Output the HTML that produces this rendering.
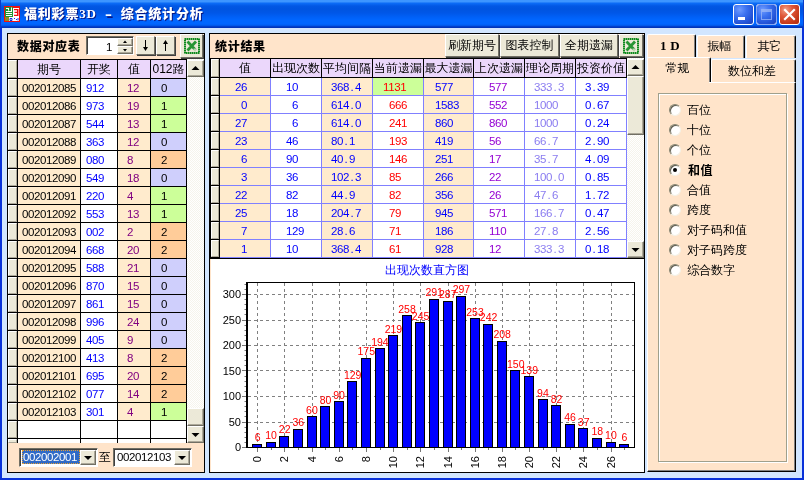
<!DOCTYPE html>
<html lang="zh-CN"><head><meta charset="utf-8"><title>福利彩票3D - 综合统计分析</title>
<style>
html,body{margin:0;padding:0;}
body{width:804px;height:480px;overflow:hidden;position:relative;background:#D2E6FF;font-family:"Liberation Sans","WenQuanYi Zen Hei Sharp","WenQuanYi Zen Hei","Noto Sans CJK SC",sans-serif;font-size:12px;color:#000;}
div{position:absolute;box-sizing:border-box;white-space:nowrap;overflow:hidden;}
.c{text-align:center;line-height:17px;}
.n{font-size:11.5px;letter-spacing:-0.4px;line-height:19px;}
.d{display:inline-block;width:6px;text-align:center;}
.h{line-height:18px;text-align:center;font-size:12px;}
.btn{background:#ECE9D8;border:1px solid;border-color:#fff #716F64 #716F64 #fff;box-shadow:1px 1px 0 #404040;text-align:center;}
.ind{background:#ECE9D8;border:1px solid;border-color:#fff #ACA899 #ACA899 #fff;}
.sb{background:#ECE9D8;border:1px solid;border-color:#fff #716F64 #716F64 #fff;box-shadow:inset -1px -1px 0 #ACA899;}
.trk{background-color:#F6F4EC;background-image:linear-gradient(45deg,#fff 25%,transparent 25%,transparent 75%,#fff 75%),linear-gradient(45deg,#fff 25%,transparent 25%,transparent 75%,#fff 75%);background-size:2px 2px;background-position:0 0,1px 1px;}
.b{font-weight:bold;}
.rl{font-size:12px;line-height:14px;}
svg{position:absolute;overflow:visible;}
</style></head>
<body>
<div style="left:0;top:0;width:804px;height:480px;will-change:transform;">
<div style="left:0;top:0;width:804px;height:28px;background:linear-gradient(to bottom,#3D95FF 0,#3D95FF 1.5px,#0B6AF5 3.5px,#0257E4 6px,#0054E0 9px,#0057E8 13px,#0060F7 17px,#0066FF 20px,#0066FF 24px,#0058EA 25.5px,#0040CC 26.5px,#002EB0 28px);"></div>
<div style="left:0px;top:0px;width:1px;height:28px;background:#0A3CC8;"></div>
<div style="left:803px;top:0px;width:1px;height:28px;background:#0A3CC8;"></div>
<div style="left:0px;top:28px;width:2px;height:452px;background:#0831D9;"></div>
<div style="left:802px;top:28px;width:2px;height:452px;background:#0831D9;"></div>
<div style="left:0px;top:478px;width:804px;height:2px;background:#0831D9;"></div>
<svg style="left:4px;top:6px" width="16" height="16" viewBox="0 0 16 16">
<rect x="0" y="0" width="16" height="16" fill="#F01010"/>
<rect x="1" y="1" width="8" height="10" fill="#1E9630"/>
<rect x="9" y="2" width="6" height="9" fill="#fff"/>
<rect x="1" y="11" width="4" height="4" fill="#8C8C20"/>
<rect x="5" y="11" width="10" height="4" fill="#fff"/>
<path d="M2 2.5h3 M4.500 2.500v2 M2 5.500h6 M7.500 1.500v4 M2 7.500h6 M2 9.500h6" stroke="#fff" stroke-width="1" fill="none"/>
<path d="M10 3h4.500v7h-4.500v-1.300h3v-1.700h-2.500v-1.300h2.500v-1.400h-3z" fill="#F01010"/>
<path d="M6 12.500h2v2h-2z M10 12.500h1 M12 13.500h1 M14 12v2.500" stroke="#1030E0" stroke-width="1" fill="none"/>
</svg>
<div class="b" style="left:24px;top:4px;height:20px;line-height:20px;font-size:13px;font-weight:900;color:#fff;letter-spacing:0.8px;font-family:'Liberation Serif','Noto Sans CJK SC',serif;text-shadow:1px 1px 0 #0A1883;">福利彩票3D<span style="display:inline-block;width:24px;text-align:center;transform:scale(1.6,1.5)">-</span>综合统计分析</div>
<div style="left:733px;top:4px;width:21px;height:21px;border:1px solid #fff;border-radius:3px;background:radial-gradient(circle at 30% 25%,#6F9BFF 0%,#3C72F0 35%,#2454D8 70%,#1C40B8 100%);"></div>
<div style="left:756px;top:4px;width:21px;height:21px;border:1px solid #fff;border-radius:3px;background:radial-gradient(circle at 30% 25%,#6F9BFF 0%,#3C72F0 35%,#2454D8 70%,#1C40B8 100%);"></div>
<div style="left:779px;top:4px;width:21px;height:21px;border:1px solid #fff;border-radius:3px;background:radial-gradient(circle at 30% 25%,#F0A088 0%,#E0583A 35%,#C63A1B 70%,#B02A10 100%);"></div>
<div style="left:756px;top:4px;width:21px;height:21px;border:1px solid #86A6F2;border-radius:3px;"></div>
<div style="left:738px;top:17px;width:7px;height:3px;background:#fff;"></div>
<div style="left:761px;top:9px;width:11px;height:11px;border:1px solid #9DB8F5;border-top-width:3px;opacity:.75"></div>
<svg style="left:779px;top:4px" width="21" height="21"><path d="M6 6L15 15M15 6L6 15" stroke="#fff" stroke-width="2.2" stroke-linecap="square"/></svg>
<div style="left:7px;top:33px;width:198px;height:440px;background:#FFE4CA;border:1px solid #000;"></div>
<div class="b" style="left:17px;top:37px;height:17px;line-height:17px;font-size:12px;letter-spacing:0.7px;font-weight:900;font-family:'Noto Sans CJK SC',sans-serif;">数据对应表</div>
<div style="left:86px;top:36px;width:48px;height:19px;background:#fff;border:1px solid;border-color:#716F64 #fff #fff #716F64;box-shadow:inset 1px 1px 0 #404040;"></div>
<div class="n" style="left:88px;top:38px;width:24px;height:16px;line-height:18px;text-align:right;">1</div>
<div class="sb" style="left:117px;top:38px;width:16px;height:8px;"></div>
<div class="sb" style="left:117px;top:46px;width:16px;height:8px;"></div>
<svg style="left:117px;top:38px" width="16" height="16"><path d="M6 5h4l-2-2.500z M6 11h4l-2 2.500z" fill="#000"/></svg>
<div class="btn" style="left:136px;top:36px;width:19px;height:19px;"></div>
<div class="btn" style="left:156px;top:36px;width:19px;height:19px;"></div>
<svg style="left:136px;top:36px" width="40" height="19"><path d="M9.5 4v9M29.5 15v-9" stroke="#000" stroke-width="1" fill="none"/><path d="M7 11h5l-2.500 4z M27 8h5l-2.500-4z" fill="#000"/></svg>
<div class="btn" style="left:180px;top:34px;width:23px;height:24px;"></div>
<svg style="left:184px;top:38px" width="16" height="16" viewBox="0 0 16 16">
<rect x="1" y="1" width="14" height="14" fill="none" stroke="#0E8A1E" stroke-width="2" stroke-dasharray="1 1"/>
<rect x="1" y="1" width="14" height="14" fill="none" stroke="#0E8A1E" stroke-width="2" opacity=".55"/>
<path d="M3.500 3.500L12 12.500M12 3.500L3.500 12.500" stroke="#128C22" stroke-width="2.8" opacity=".9"/>
<path d="M9.500 10.500h4v3h-4z" fill="#ECE9D8" opacity=".75"/>
</svg>
<div style="left:8px;top:59px;width:179px;height:384px;background:#000;"></div>
<div class="ind" style="left:8px;top:60px;width:9px;height:18px;"></div>
<div class="h" style="left:18px;top:60px;width:62px;height:18px;background:#EBD7FB;">期号</div>
<div class="h" style="left:81px;top:60px;width:36px;height:18px;background:#EBD7FB;">开奖</div>
<div class="h" style="left:118px;top:60px;width:32px;height:18px;background:#EBD7FB;">值</div>
<div class="h" style="left:151px;top:60px;width:35px;height:18px;background:#EBD7FB;">012路</div>
<div class="ind" style="left:8px;top:79px;width:9px;height:17px;"></div>
<div class="n" style="left:18px;top:79px;width:62px;height:17px;background:#FFEBCD;padding-left:4px;">002012085</div>
<div class="n" style="left:81px;top:79px;width:36px;height:17px;background:#fff;padding-left:5px;color:#0000FF;">912</div>
<div class="n" style="left:118px;top:79px;width:32px;height:17px;background:#FFEBCD;padding-left:9px;color:#800080;">12</div>
<div class="n" style="left:151px;top:79px;width:35px;height:17px;background:#CFCFFC;padding-left:10px;">0</div>
<div class="ind" style="left:8px;top:97px;width:9px;height:17px;"></div>
<div class="n" style="left:18px;top:97px;width:62px;height:17px;background:#FFEBCD;padding-left:4px;">002012086</div>
<div class="n" style="left:81px;top:97px;width:36px;height:17px;background:#fff;padding-left:5px;color:#0000FF;">973</div>
<div class="n" style="left:118px;top:97px;width:32px;height:17px;background:#FFEBCD;padding-left:9px;color:#800080;">19</div>
<div class="n" style="left:151px;top:97px;width:35px;height:17px;background:#CCFF99;padding-left:10px;">1</div>
<div class="ind" style="left:8px;top:115px;width:9px;height:17px;"></div>
<div class="n" style="left:18px;top:115px;width:62px;height:17px;background:#FFEBCD;padding-left:4px;">002012087</div>
<div class="n" style="left:81px;top:115px;width:36px;height:17px;background:#fff;padding-left:5px;color:#0000FF;">544</div>
<div class="n" style="left:118px;top:115px;width:32px;height:17px;background:#FFEBCD;padding-left:9px;color:#800080;">13</div>
<div class="n" style="left:151px;top:115px;width:35px;height:17px;background:#CCFF99;padding-left:10px;">1</div>
<div class="ind" style="left:8px;top:133px;width:9px;height:17px;"></div>
<div class="n" style="left:18px;top:133px;width:62px;height:17px;background:#FFEBCD;padding-left:4px;">002012088</div>
<div class="n" style="left:81px;top:133px;width:36px;height:17px;background:#fff;padding-left:5px;color:#0000FF;">363</div>
<div class="n" style="left:118px;top:133px;width:32px;height:17px;background:#FFEBCD;padding-left:9px;color:#800080;">12</div>
<div class="n" style="left:151px;top:133px;width:35px;height:17px;background:#CFCFFC;padding-left:10px;">0</div>
<div class="ind" style="left:8px;top:151px;width:9px;height:17px;"></div>
<div class="n" style="left:18px;top:151px;width:62px;height:17px;background:#FFEBCD;padding-left:4px;">002012089</div>
<div class="n" style="left:81px;top:151px;width:36px;height:17px;background:#fff;padding-left:5px;color:#0000FF;">080</div>
<div class="n" style="left:118px;top:151px;width:32px;height:17px;background:#FFEBCD;padding-left:9px;color:#800080;">8</div>
<div class="n" style="left:151px;top:151px;width:35px;height:17px;background:#FFCC99;padding-left:10px;">2</div>
<div class="ind" style="left:8px;top:169px;width:9px;height:17px;"></div>
<div class="n" style="left:18px;top:169px;width:62px;height:17px;background:#FFEBCD;padding-left:4px;">002012090</div>
<div class="n" style="left:81px;top:169px;width:36px;height:17px;background:#fff;padding-left:5px;color:#0000FF;">549</div>
<div class="n" style="left:118px;top:169px;width:32px;height:17px;background:#FFEBCD;padding-left:9px;color:#800080;">18</div>
<div class="n" style="left:151px;top:169px;width:35px;height:17px;background:#CFCFFC;padding-left:10px;">0</div>
<div class="ind" style="left:8px;top:187px;width:9px;height:17px;"></div>
<div class="n" style="left:18px;top:187px;width:62px;height:17px;background:#FFEBCD;padding-left:4px;">002012091</div>
<div class="n" style="left:81px;top:187px;width:36px;height:17px;background:#fff;padding-left:5px;color:#0000FF;">220</div>
<div class="n" style="left:118px;top:187px;width:32px;height:17px;background:#FFEBCD;padding-left:9px;color:#800080;">4</div>
<div class="n" style="left:151px;top:187px;width:35px;height:17px;background:#CCFF99;padding-left:10px;">1</div>
<div class="ind" style="left:8px;top:205px;width:9px;height:17px;"></div>
<div class="n" style="left:18px;top:205px;width:62px;height:17px;background:#FFEBCD;padding-left:4px;">002012092</div>
<div class="n" style="left:81px;top:205px;width:36px;height:17px;background:#fff;padding-left:5px;color:#0000FF;">553</div>
<div class="n" style="left:118px;top:205px;width:32px;height:17px;background:#FFEBCD;padding-left:9px;color:#800080;">13</div>
<div class="n" style="left:151px;top:205px;width:35px;height:17px;background:#CCFF99;padding-left:10px;">1</div>
<div class="ind" style="left:8px;top:223px;width:9px;height:17px;"></div>
<div class="n" style="left:18px;top:223px;width:62px;height:17px;background:#FFEBCD;padding-left:4px;">002012093</div>
<div class="n" style="left:81px;top:223px;width:36px;height:17px;background:#fff;padding-left:5px;color:#0000FF;">002</div>
<div class="n" style="left:118px;top:223px;width:32px;height:17px;background:#FFEBCD;padding-left:9px;color:#800080;">2</div>
<div class="n" style="left:151px;top:223px;width:35px;height:17px;background:#FFCC99;padding-left:10px;">2</div>
<div class="ind" style="left:8px;top:241px;width:9px;height:17px;"></div>
<div class="n" style="left:18px;top:241px;width:62px;height:17px;background:#FFEBCD;padding-left:4px;">002012094</div>
<div class="n" style="left:81px;top:241px;width:36px;height:17px;background:#fff;padding-left:5px;color:#0000FF;">668</div>
<div class="n" style="left:118px;top:241px;width:32px;height:17px;background:#FFEBCD;padding-left:9px;color:#800080;">20</div>
<div class="n" style="left:151px;top:241px;width:35px;height:17px;background:#FFCC99;padding-left:10px;">2</div>
<div class="ind" style="left:8px;top:259px;width:9px;height:17px;"></div>
<div class="n" style="left:18px;top:259px;width:62px;height:17px;background:#FFEBCD;padding-left:4px;">002012095</div>
<div class="n" style="left:81px;top:259px;width:36px;height:17px;background:#fff;padding-left:5px;color:#0000FF;">588</div>
<div class="n" style="left:118px;top:259px;width:32px;height:17px;background:#FFEBCD;padding-left:9px;color:#800080;">21</div>
<div class="n" style="left:151px;top:259px;width:35px;height:17px;background:#CFCFFC;padding-left:10px;">0</div>
<div class="ind" style="left:8px;top:277px;width:9px;height:17px;"></div>
<div class="n" style="left:18px;top:277px;width:62px;height:17px;background:#FFEBCD;padding-left:4px;">002012096</div>
<div class="n" style="left:81px;top:277px;width:36px;height:17px;background:#fff;padding-left:5px;color:#0000FF;">870</div>
<div class="n" style="left:118px;top:277px;width:32px;height:17px;background:#FFEBCD;padding-left:9px;color:#800080;">15</div>
<div class="n" style="left:151px;top:277px;width:35px;height:17px;background:#CFCFFC;padding-left:10px;">0</div>
<div class="ind" style="left:8px;top:295px;width:9px;height:17px;"></div>
<div class="n" style="left:18px;top:295px;width:62px;height:17px;background:#FFEBCD;padding-left:4px;">002012097</div>
<div class="n" style="left:81px;top:295px;width:36px;height:17px;background:#fff;padding-left:5px;color:#0000FF;">861</div>
<div class="n" style="left:118px;top:295px;width:32px;height:17px;background:#FFEBCD;padding-left:9px;color:#800080;">15</div>
<div class="n" style="left:151px;top:295px;width:35px;height:17px;background:#CFCFFC;padding-left:10px;">0</div>
<div class="ind" style="left:8px;top:313px;width:9px;height:17px;"></div>
<div class="n" style="left:18px;top:313px;width:62px;height:17px;background:#FFEBCD;padding-left:4px;">002012098</div>
<div class="n" style="left:81px;top:313px;width:36px;height:17px;background:#fff;padding-left:5px;color:#0000FF;">996</div>
<div class="n" style="left:118px;top:313px;width:32px;height:17px;background:#FFEBCD;padding-left:9px;color:#800080;">24</div>
<div class="n" style="left:151px;top:313px;width:35px;height:17px;background:#CFCFFC;padding-left:10px;">0</div>
<div class="ind" style="left:8px;top:331px;width:9px;height:17px;"></div>
<div class="n" style="left:18px;top:331px;width:62px;height:17px;background:#FFEBCD;padding-left:4px;">002012099</div>
<div class="n" style="left:81px;top:331px;width:36px;height:17px;background:#fff;padding-left:5px;color:#0000FF;">405</div>
<div class="n" style="left:118px;top:331px;width:32px;height:17px;background:#FFEBCD;padding-left:9px;color:#800080;">9</div>
<div class="n" style="left:151px;top:331px;width:35px;height:17px;background:#CFCFFC;padding-left:10px;">0</div>
<div class="ind" style="left:8px;top:349px;width:9px;height:17px;"></div>
<div class="n" style="left:18px;top:349px;width:62px;height:17px;background:#FFEBCD;padding-left:4px;">002012100</div>
<div class="n" style="left:81px;top:349px;width:36px;height:17px;background:#fff;padding-left:5px;color:#0000FF;">413</div>
<div class="n" style="left:118px;top:349px;width:32px;height:17px;background:#FFEBCD;padding-left:9px;color:#800080;">8</div>
<div class="n" style="left:151px;top:349px;width:35px;height:17px;background:#FFCC99;padding-left:10px;">2</div>
<div class="ind" style="left:8px;top:367px;width:9px;height:17px;"></div>
<div class="n" style="left:18px;top:367px;width:62px;height:17px;background:#FFEBCD;padding-left:4px;">002012101</div>
<div class="n" style="left:81px;top:367px;width:36px;height:17px;background:#fff;padding-left:5px;color:#0000FF;">695</div>
<div class="n" style="left:118px;top:367px;width:32px;height:17px;background:#FFEBCD;padding-left:9px;color:#800080;">20</div>
<div class="n" style="left:151px;top:367px;width:35px;height:17px;background:#FFCC99;padding-left:10px;">2</div>
<div class="ind" style="left:8px;top:385px;width:9px;height:17px;"></div>
<div class="n" style="left:18px;top:385px;width:62px;height:17px;background:#FFEBCD;padding-left:4px;">002012102</div>
<div class="n" style="left:81px;top:385px;width:36px;height:17px;background:#fff;padding-left:5px;color:#0000FF;">077</div>
<div class="n" style="left:118px;top:385px;width:32px;height:17px;background:#FFEBCD;padding-left:9px;color:#800080;">14</div>
<div class="n" style="left:151px;top:385px;width:35px;height:17px;background:#FFCC99;padding-left:10px;">2</div>
<div class="ind" style="left:8px;top:403px;width:9px;height:17px;"></div>
<div class="n" style="left:18px;top:403px;width:62px;height:17px;background:#FFEBCD;padding-left:4px;">002012103</div>
<div class="n" style="left:81px;top:403px;width:36px;height:17px;background:#fff;padding-left:5px;color:#0000FF;">301</div>
<div class="n" style="left:118px;top:403px;width:32px;height:17px;background:#FFEBCD;padding-left:9px;color:#800080;">4</div>
<div class="n" style="left:151px;top:403px;width:35px;height:17px;background:#CCFF99;padding-left:10px;">1</div>
<div class="ind" style="left:8px;top:421px;width:9px;height:17px;"></div>
<div style="left:18px;top:421px;width:62px;height:17px;background:#fff;"></div>
<div style="left:81px;top:421px;width:36px;height:17px;background:#fff;"></div>
<div style="left:118px;top:421px;width:32px;height:17px;background:#fff;"></div>
<div style="left:151px;top:421px;width:35px;height:17px;background:#fff;"></div>
<div class="ind" style="left:8px;top:439px;width:9px;height:4px;"></div>
<div style="left:18px;top:439px;width:62px;height:4px;background:#fff;"></div>
<div style="left:81px;top:439px;width:36px;height:4px;background:#fff;"></div>
<div style="left:118px;top:439px;width:32px;height:4px;background:#fff;"></div>
<div style="left:151px;top:439px;width:35px;height:4px;background:#fff;"></div>
<div class="trk" style="left:187px;top:59px;width:17px;height:384px;"></div>
<div class="sb" style="left:187px;top:60px;width:17px;height:17px;"></div>
<div class="sb" style="left:187px;top:408px;width:17px;height:18px;"></div>
<div class="sb" style="left:187px;top:426px;width:17px;height:17px;"></div>
<svg style="left:187px;top:60px" width="17" height="17"><path d="M4.500 10h8l-4-4z" fill="#000"/></svg>
<svg style="left:187px;top:426px" width="17" height="17"><path d="M4.500 7h8l-4 4z" fill="#000"/></svg>
<div style="left:19px;top:448px;width:79px;height:19px;background:#fff;border:1px solid;border-color:#716F64 #fff #fff #716F64;box-shadow:inset 1px 1px 0 #404040;"></div>
<div class="n" style="left:22px;top:450px;width:58px;height:14px;background:#316AC5;color:#fff;line-height:15px;padding-left:1px;outline:1px dotted #E8A030;outline-offset:-1px;">002002001</div>
<div class="sb" style="left:80px;top:450px;width:16px;height:15px;"></div>
<svg style="left:80px;top:450px" width="16" height="15"><path d="M4 6h8l-4 4z" fill="#000"/></svg>
<div style="left:99px;top:450px;height:15px;line-height:15px;font-size:12px;">至</div>
<div style="left:113px;top:448px;width:79px;height:19px;background:#fff;border:1px solid;border-color:#716F64 #fff #fff #716F64;box-shadow:inset 1px 1px 0 #404040;"></div>
<div class="n" style="left:116px;top:450px;width:58px;height:14px;line-height:15px;padding-left:1px;">002012103</div>
<div class="sb" style="left:174px;top:450px;width:16px;height:15px;"></div>
<svg style="left:174px;top:450px" width="16" height="15"><path d="M4 6h8l-4 4z" fill="#000"/></svg>
<div style="left:209px;top:33px;width:436px;height:440px;background:#FFE4CA;border:1px solid #000;"></div>
<div class="b" style="left:215px;top:37px;height:17px;line-height:17px;font-size:12px;letter-spacing:0.7px;font-weight:900;font-family:'Noto Sans CJK SC',sans-serif;">统计结果</div>
<div class="btn" style="left:445px;top:34px;width:54px;height:23px;line-height:21px;font-size:12px;">刷新期号</div>
<div class="btn" style="left:500px;top:34px;width:59px;height:23px;line-height:21px;font-size:12px;">图表控制</div>
<div class="btn" style="left:560px;top:34px;width:58px;height:23px;line-height:21px;font-size:12px;">全期遗漏</div>
<div class="btn" style="left:619px;top:34px;width:24px;height:23px;"></div>
<svg style="left:623px;top:38px" width="16" height="16" viewBox="0 0 16 16">
<rect x="1" y="1" width="14" height="14" fill="none" stroke="#0E8A1E" stroke-width="2" stroke-dasharray="1 1"/>
<rect x="1" y="1" width="14" height="14" fill="none" stroke="#0E8A1E" stroke-width="2" opacity=".55"/>
<path d="M3.500 3.500L12 12.500M12 3.500L3.500 12.500" stroke="#128C22" stroke-width="2.8" opacity=".9"/>
<path d="M9.500 10.500h4v3h-4z" fill="#ECE9D8" opacity=".75"/>
</svg>
<div style="left:210px;top:58px;width:417px;height:200px;background:#000;"></div>
<div style="left:220px;top:78px;width:407px;height:180px;background:#8080FF;"></div>
<div class="ind" style="left:211px;top:59px;width:8px;height:18px;"></div>
<div class="h" style="left:220px;top:59px;width:50px;height:18px;background:#EBD7FB;">值</div>
<div class="h" style="left:271px;top:59px;width:50px;height:18px;background:#EBD7FB;">出现次数</div>
<div class="h" style="left:322px;top:59px;width:50px;height:18px;background:#EBD7FB;">平均间隔</div>
<div class="h" style="left:373px;top:59px;width:50px;height:18px;background:#EBD7FB;">当前遗漏</div>
<div class="h" style="left:424px;top:59px;width:49px;height:18px;background:#EBD7FB;">最大遗漏</div>
<div class="h" style="left:474px;top:59px;width:50px;height:18px;background:#EBD7FB;">上次遗漏</div>
<div class="h" style="left:525px;top:59px;width:50px;height:18px;background:#EBD7FB;">理论周期</div>
<div class="h" style="left:576px;top:59px;width:50px;height:18px;background:#EBD7FB;">投资价值</div>
<div class="ind" style="left:211px;top:78px;width:8px;height:17px;"></div>
<div class="n" style="left:220px;top:78px;width:50px;height:17px;background:#FFEBCD;color:#0000FF;padding-left:15px;">26</div>
<div class="n" style="left:271px;top:78px;width:50px;height:17px;background:#fff;color:#0000FF;padding-left:15px;">10</div>
<div class="n" style="left:322px;top:78px;width:50px;height:17px;background:#FFEBCD;color:#0000FF;padding-left:9px;">368<span class="d">.</span>4</div>
<div class="n" style="left:373px;top:78px;width:50px;height:17px;background:#CCFF99;color:#FF0000;padding-left:10px;">1131</div>
<div class="n" style="left:424px;top:78px;width:49px;height:17px;background:#FFEBCD;color:#0000FF;padding-left:11px;">577</div>
<div class="n" style="left:474px;top:78px;width:50px;height:17px;background:#fff;color:#9400D3;padding-left:15px;">577</div>
<div class="n" style="left:525px;top:78px;width:50px;height:17px;background:#fff;color:#8A7CF0;padding-left:9px;">333<span class="d">.</span>3</div>
<div class="n" style="left:576px;top:78px;width:50px;height:17px;background:#fff;color:#0000FF;padding-left:9px;">3<span class="d">.</span>39</div>
<div class="ind" style="left:211px;top:96px;width:8px;height:17px;"></div>
<div class="n" style="left:220px;top:96px;width:50px;height:17px;background:#FFEBCD;color:#0000FF;padding-left:21px;">0</div>
<div class="n" style="left:271px;top:96px;width:50px;height:17px;background:#fff;color:#0000FF;padding-left:21px;">6</div>
<div class="n" style="left:322px;top:96px;width:50px;height:17px;background:#FFEBCD;color:#0000FF;padding-left:9px;">614<span class="d">.</span>0</div>
<div class="n" style="left:373px;top:96px;width:50px;height:17px;background:#fff;color:#FF0000;padding-left:16px;">666</div>
<div class="n" style="left:424px;top:96px;width:49px;height:17px;background:#FFEBCD;color:#0000FF;padding-left:11px;">1583</div>
<div class="n" style="left:474px;top:96px;width:50px;height:17px;background:#fff;color:#9400D3;padding-left:15px;">552</div>
<div class="n" style="left:525px;top:96px;width:50px;height:17px;background:#fff;color:#8A7CF0;padding-left:9px;">1000</div>
<div class="n" style="left:576px;top:96px;width:50px;height:17px;background:#fff;color:#0000FF;padding-left:9px;">0<span class="d">.</span>67</div>
<div class="ind" style="left:211px;top:114px;width:8px;height:17px;"></div>
<div class="n" style="left:220px;top:114px;width:50px;height:17px;background:#FFEBCD;color:#0000FF;padding-left:15px;">27</div>
<div class="n" style="left:271px;top:114px;width:50px;height:17px;background:#fff;color:#0000FF;padding-left:21px;">6</div>
<div class="n" style="left:322px;top:114px;width:50px;height:17px;background:#FFEBCD;color:#0000FF;padding-left:9px;">614<span class="d">.</span>0</div>
<div class="n" style="left:373px;top:114px;width:50px;height:17px;background:#fff;color:#FF0000;padding-left:16px;">241</div>
<div class="n" style="left:424px;top:114px;width:49px;height:17px;background:#FFEBCD;color:#0000FF;padding-left:11px;">860</div>
<div class="n" style="left:474px;top:114px;width:50px;height:17px;background:#fff;color:#9400D3;padding-left:15px;">860</div>
<div class="n" style="left:525px;top:114px;width:50px;height:17px;background:#fff;color:#8A7CF0;padding-left:9px;">1000</div>
<div class="n" style="left:576px;top:114px;width:50px;height:17px;background:#fff;color:#0000FF;padding-left:9px;">0<span class="d">.</span>24</div>
<div class="ind" style="left:211px;top:132px;width:8px;height:17px;"></div>
<div class="n" style="left:220px;top:132px;width:50px;height:17px;background:#FFEBCD;color:#0000FF;padding-left:15px;">23</div>
<div class="n" style="left:271px;top:132px;width:50px;height:17px;background:#fff;color:#0000FF;padding-left:15px;">46</div>
<div class="n" style="left:322px;top:132px;width:50px;height:17px;background:#FFEBCD;color:#0000FF;padding-left:9px;">80<span class="d">.</span>1</div>
<div class="n" style="left:373px;top:132px;width:50px;height:17px;background:#fff;color:#FF0000;padding-left:16px;">193</div>
<div class="n" style="left:424px;top:132px;width:49px;height:17px;background:#FFEBCD;color:#0000FF;padding-left:11px;">419</div>
<div class="n" style="left:474px;top:132px;width:50px;height:17px;background:#fff;color:#9400D3;padding-left:15px;">56</div>
<div class="n" style="left:525px;top:132px;width:50px;height:17px;background:#fff;color:#8A7CF0;padding-left:9px;">66<span class="d">.</span>7</div>
<div class="n" style="left:576px;top:132px;width:50px;height:17px;background:#fff;color:#0000FF;padding-left:9px;">2<span class="d">.</span>90</div>
<div class="ind" style="left:211px;top:150px;width:8px;height:17px;"></div>
<div class="n" style="left:220px;top:150px;width:50px;height:17px;background:#FFEBCD;color:#0000FF;padding-left:21px;">6</div>
<div class="n" style="left:271px;top:150px;width:50px;height:17px;background:#fff;color:#0000FF;padding-left:15px;">90</div>
<div class="n" style="left:322px;top:150px;width:50px;height:17px;background:#FFEBCD;color:#0000FF;padding-left:9px;">40<span class="d">.</span>9</div>
<div class="n" style="left:373px;top:150px;width:50px;height:17px;background:#fff;color:#FF0000;padding-left:16px;">146</div>
<div class="n" style="left:424px;top:150px;width:49px;height:17px;background:#FFEBCD;color:#0000FF;padding-left:11px;">251</div>
<div class="n" style="left:474px;top:150px;width:50px;height:17px;background:#fff;color:#9400D3;padding-left:15px;">17</div>
<div class="n" style="left:525px;top:150px;width:50px;height:17px;background:#fff;color:#8A7CF0;padding-left:9px;">35<span class="d">.</span>7</div>
<div class="n" style="left:576px;top:150px;width:50px;height:17px;background:#fff;color:#0000FF;padding-left:9px;">4<span class="d">.</span>09</div>
<div class="ind" style="left:211px;top:168px;width:8px;height:17px;"></div>
<div class="n" style="left:220px;top:168px;width:50px;height:17px;background:#FFEBCD;color:#0000FF;padding-left:21px;">3</div>
<div class="n" style="left:271px;top:168px;width:50px;height:17px;background:#fff;color:#0000FF;padding-left:15px;">36</div>
<div class="n" style="left:322px;top:168px;width:50px;height:17px;background:#FFEBCD;color:#0000FF;padding-left:9px;">102<span class="d">.</span>3</div>
<div class="n" style="left:373px;top:168px;width:50px;height:17px;background:#fff;color:#FF0000;padding-left:16px;">85</div>
<div class="n" style="left:424px;top:168px;width:49px;height:17px;background:#FFEBCD;color:#0000FF;padding-left:11px;">266</div>
<div class="n" style="left:474px;top:168px;width:50px;height:17px;background:#fff;color:#9400D3;padding-left:15px;">22</div>
<div class="n" style="left:525px;top:168px;width:50px;height:17px;background:#fff;color:#8A7CF0;padding-left:9px;">100<span class="d">.</span>0</div>
<div class="n" style="left:576px;top:168px;width:50px;height:17px;background:#fff;color:#0000FF;padding-left:9px;">0<span class="d">.</span>85</div>
<div class="ind" style="left:211px;top:186px;width:8px;height:17px;"></div>
<div class="n" style="left:220px;top:186px;width:50px;height:17px;background:#FFEBCD;color:#0000FF;padding-left:15px;">22</div>
<div class="n" style="left:271px;top:186px;width:50px;height:17px;background:#fff;color:#0000FF;padding-left:15px;">82</div>
<div class="n" style="left:322px;top:186px;width:50px;height:17px;background:#FFEBCD;color:#0000FF;padding-left:9px;">44<span class="d">.</span>9</div>
<div class="n" style="left:373px;top:186px;width:50px;height:17px;background:#fff;color:#FF0000;padding-left:16px;">82</div>
<div class="n" style="left:424px;top:186px;width:49px;height:17px;background:#FFEBCD;color:#0000FF;padding-left:11px;">356</div>
<div class="n" style="left:474px;top:186px;width:50px;height:17px;background:#fff;color:#9400D3;padding-left:15px;">26</div>
<div class="n" style="left:525px;top:186px;width:50px;height:17px;background:#fff;color:#8A7CF0;padding-left:9px;">47<span class="d">.</span>6</div>
<div class="n" style="left:576px;top:186px;width:50px;height:17px;background:#fff;color:#0000FF;padding-left:9px;">1<span class="d">.</span>72</div>
<div class="ind" style="left:211px;top:204px;width:8px;height:17px;"></div>
<div class="n" style="left:220px;top:204px;width:50px;height:17px;background:#FFEBCD;color:#0000FF;padding-left:15px;">25</div>
<div class="n" style="left:271px;top:204px;width:50px;height:17px;background:#fff;color:#0000FF;padding-left:15px;">18</div>
<div class="n" style="left:322px;top:204px;width:50px;height:17px;background:#FFEBCD;color:#0000FF;padding-left:9px;">204<span class="d">.</span>7</div>
<div class="n" style="left:373px;top:204px;width:50px;height:17px;background:#fff;color:#FF0000;padding-left:16px;">79</div>
<div class="n" style="left:424px;top:204px;width:49px;height:17px;background:#FFEBCD;color:#0000FF;padding-left:11px;">945</div>
<div class="n" style="left:474px;top:204px;width:50px;height:17px;background:#fff;color:#9400D3;padding-left:15px;">571</div>
<div class="n" style="left:525px;top:204px;width:50px;height:17px;background:#fff;color:#8A7CF0;padding-left:9px;">166<span class="d">.</span>7</div>
<div class="n" style="left:576px;top:204px;width:50px;height:17px;background:#fff;color:#0000FF;padding-left:9px;">0<span class="d">.</span>47</div>
<div class="ind" style="left:211px;top:222px;width:8px;height:17px;"></div>
<div class="n" style="left:220px;top:222px;width:50px;height:17px;background:#FFEBCD;color:#0000FF;padding-left:21px;">7</div>
<div class="n" style="left:271px;top:222px;width:50px;height:17px;background:#fff;color:#0000FF;padding-left:15px;">129</div>
<div class="n" style="left:322px;top:222px;width:50px;height:17px;background:#FFEBCD;color:#0000FF;padding-left:9px;">28<span class="d">.</span>6</div>
<div class="n" style="left:373px;top:222px;width:50px;height:17px;background:#fff;color:#FF0000;padding-left:16px;">71</div>
<div class="n" style="left:424px;top:222px;width:49px;height:17px;background:#FFEBCD;color:#0000FF;padding-left:11px;">186</div>
<div class="n" style="left:474px;top:222px;width:50px;height:17px;background:#fff;color:#9400D3;padding-left:15px;">110</div>
<div class="n" style="left:525px;top:222px;width:50px;height:17px;background:#fff;color:#8A7CF0;padding-left:9px;">27<span class="d">.</span>8</div>
<div class="n" style="left:576px;top:222px;width:50px;height:17px;background:#fff;color:#0000FF;padding-left:9px;">2<span class="d">.</span>56</div>
<div class="ind" style="left:211px;top:240px;width:8px;height:17px;"></div>
<div class="n" style="left:220px;top:240px;width:50px;height:17px;background:#FFEBCD;color:#0000FF;padding-left:21px;">1</div>
<div class="n" style="left:271px;top:240px;width:50px;height:17px;background:#fff;color:#0000FF;padding-left:15px;">10</div>
<div class="n" style="left:322px;top:240px;width:50px;height:17px;background:#FFEBCD;color:#0000FF;padding-left:9px;">368<span class="d">.</span>4</div>
<div class="n" style="left:373px;top:240px;width:50px;height:17px;background:#fff;color:#FF0000;padding-left:16px;">61</div>
<div class="n" style="left:424px;top:240px;width:49px;height:17px;background:#FFEBCD;color:#0000FF;padding-left:11px;">928</div>
<div class="n" style="left:474px;top:240px;width:50px;height:17px;background:#fff;color:#9400D3;padding-left:15px;">12</div>
<div class="n" style="left:525px;top:240px;width:50px;height:17px;background:#fff;color:#8A7CF0;padding-left:9px;">333<span class="d">.</span>3</div>
<div class="n" style="left:576px;top:240px;width:50px;height:17px;background:#fff;color:#0000FF;padding-left:9px;">0<span class="d">.</span>18</div>
<div class="trk" style="left:627px;top:58px;width:17px;height:200px;"></div>
<div class="sb" style="left:627px;top:59px;width:17px;height:17px;"></div>
<div class="sb" style="left:627px;top:76px;width:17px;height:59px;"></div>
<div class="sb" style="left:627px;top:241px;width:17px;height:17px;"></div>
<svg style="left:627px;top:59px" width="17" height="17"><path d="M4.5 10h8l-4-4z" fill="#000"/></svg>
<svg style="left:627px;top:241px" width="17" height="17"><path d="M4.5 7h8l-4 4z" fill="#000"/></svg>
<div style="left:210px;top:258px;width:434px;height:1px;background:#000;"></div>
<div style="left:211px;top:259px;width:433px;height:213px;background:#fff;"></div>
<svg style="left:0;top:0" width="804" height="480" viewBox="0 0 804 480" font-family="Liberation Sans, sans-serif">
<text x="427" y="274" font-size="12" fill="#0000FF" text-anchor="middle" font-family="Liberation Sans, WenQuanYi Zen Hei, Noto Sans CJK SC, sans-serif">出现次数直方图</text>
<path d="M248 422.5H634 M248 396.5H634 M248 370.5H634 M248 345.5H634 M248 320.5H634 M248 294.5H634 M257.5 283V447 M284.5 283V447 M312.5 283V447 M339.5 283V447 M366.5 283V447 M393.5 283V447 M420.5 283V447 M448.5 283V447 M475.5 283V447 M502.5 283V447 M529.5 283V447 M556.5 283V447 M583.5 283V447 M611.5 283V447" stroke="#808080" stroke-width="1" stroke-dasharray="3 3" fill="none"/>
<path d="M247 282V448" stroke="#000" stroke-width="2"/>
<path d="M246 447.5H635 M246 282.5H635 M634.5 282V448" stroke="#000" stroke-width="1" fill="none"/>
<path d="M242 447.5H246 M244.5 442.5H246 M244.5 437.5H246 M244.5 432.5H246 M244.5 427.5H246 M242 422.5H246 M244.5 416.5H246 M244.5 411.5H246 M244.5 406.5H246 M244.5 401.5H246 M242 396.5H246 M244.5 391.5H246 M244.5 386.5H246 M244.5 381.5H246 M244.5 376.5H246 M242 370.5H246 M244.5 365.5H246 M244.5 360.5H246 M244.5 355.5H246 M244.5 350.5H246 M242 345.5H246 M244.5 340.5H246 M244.5 335.5H246 M244.5 330.5H246 M244.5 325.5H246 M242 320.5H246 M244.5 314.5H246 M244.5 309.5H246 M244.5 304.5H246 M244.5 299.5H246 M242 294.5H246 M244.5 289.5H246 M244.5 284.5H246 M257.5 448V452 M271.5 448V450 M284.5 448V452 M298.5 448V450 M312.5 448V452 M325.5 448V450 M339.5 448V452 M352.5 448V450 M366.5 448V452 M380.5 448V450 M393.5 448V452 M407.5 448V450 M420.5 448V452 M434.5 448V450 M448.5 448V452 M461.5 448V450 M475.5 448V452 M488.5 448V450 M502.5 448V452 M515.5 448V450 M529.5 448V452 M543.5 448V450 M556.5 448V452 M570.5 448V450 M583.5 448V452 M597.5 448V450 M611.5 448V452 M624.5 448V450" stroke="#777" stroke-width="1" fill="none"/>
<text x="241" y="451.0" font-size="11" text-anchor="end">0</text>
<text x="241" y="425.5" font-size="11" text-anchor="end">50</text>
<text x="241" y="400.0" font-size="11" text-anchor="end">100</text>
<text x="241" y="374.5" font-size="11" text-anchor="end">150</text>
<text x="241" y="349.0" font-size="11" text-anchor="end">200</text>
<text x="241" y="323.5" font-size="11" text-anchor="end">250</text>
<text x="241" y="298.0" font-size="11" text-anchor="end">300</text>
<text transform="translate(261.2 456) rotate(-90)" font-size="11" text-anchor="end">0</text>
<text transform="translate(288.4 456) rotate(-90)" font-size="11" text-anchor="end">2</text>
<text transform="translate(315.6 456) rotate(-90)" font-size="11" text-anchor="end">4</text>
<text transform="translate(342.8 456) rotate(-90)" font-size="11" text-anchor="end">6</text>
<text transform="translate(370.0 456) rotate(-90)" font-size="11" text-anchor="end">8</text>
<text transform="translate(397.1 456) rotate(-90)" font-size="11" text-anchor="end">10</text>
<text transform="translate(424.3 456) rotate(-90)" font-size="11" text-anchor="end">12</text>
<text transform="translate(451.5 456) rotate(-90)" font-size="11" text-anchor="end">14</text>
<text transform="translate(478.7 456) rotate(-90)" font-size="11" text-anchor="end">16</text>
<text transform="translate(505.9 456) rotate(-90)" font-size="11" text-anchor="end">18</text>
<text transform="translate(533.0 456) rotate(-90)" font-size="11" text-anchor="end">20</text>
<text transform="translate(560.2 456) rotate(-90)" font-size="11" text-anchor="end">22</text>
<text transform="translate(587.4 456) rotate(-90)" font-size="11" text-anchor="end">24</text>
<text transform="translate(614.6 456) rotate(-90)" font-size="11" text-anchor="end">26</text>
<rect x="252.5" y="444.5" width="9" height="3.0" fill="#0000FF" stroke="#000" stroke-width="1"/>
<rect x="266.5" y="442.5" width="9" height="5.0" fill="#0000FF" stroke="#000" stroke-width="1"/>
<rect x="279.5" y="436.5" width="9" height="11.0" fill="#0000FF" stroke="#000" stroke-width="1"/>
<rect x="293.5" y="429.5" width="9" height="18.0" fill="#0000FF" stroke="#000" stroke-width="1"/>
<rect x="307.5" y="416.5" width="9" height="31.0" fill="#0000FF" stroke="#000" stroke-width="1"/>
<rect x="320.5" y="406.5" width="9" height="41.0" fill="#0000FF" stroke="#000" stroke-width="1"/>
<rect x="334.5" y="401.5" width="9" height="46.0" fill="#0000FF" stroke="#000" stroke-width="1"/>
<rect x="347.5" y="381.5" width="9" height="66.0" fill="#0000FF" stroke="#000" stroke-width="1"/>
<rect x="361.5" y="358.5" width="9" height="89.0" fill="#0000FF" stroke="#000" stroke-width="1"/>
<rect x="375.5" y="348.5" width="9" height="99.0" fill="#0000FF" stroke="#000" stroke-width="1"/>
<rect x="388.5" y="335.5" width="9" height="112.0" fill="#0000FF" stroke="#000" stroke-width="1"/>
<rect x="402.5" y="315.5" width="9" height="132.0" fill="#0000FF" stroke="#000" stroke-width="1"/>
<rect x="415.5" y="322.5" width="9" height="125.0" fill="#0000FF" stroke="#000" stroke-width="1"/>
<rect x="429.5" y="299.5" width="9" height="148.0" fill="#0000FF" stroke="#000" stroke-width="1"/>
<rect x="443.5" y="301.5" width="9" height="146.0" fill="#0000FF" stroke="#000" stroke-width="1"/>
<rect x="456.5" y="296.5" width="9" height="151.0" fill="#0000FF" stroke="#000" stroke-width="1"/>
<rect x="470.5" y="318.5" width="9" height="129.0" fill="#0000FF" stroke="#000" stroke-width="1"/>
<rect x="483.5" y="324.5" width="9" height="123.0" fill="#0000FF" stroke="#000" stroke-width="1"/>
<rect x="497.5" y="341.5" width="9" height="106.0" fill="#0000FF" stroke="#000" stroke-width="1"/>
<rect x="510.5" y="370.5" width="9" height="77.0" fill="#0000FF" stroke="#000" stroke-width="1"/>
<rect x="524.5" y="376.5" width="9" height="71.0" fill="#0000FF" stroke="#000" stroke-width="1"/>
<rect x="538.5" y="399.5" width="9" height="48.0" fill="#0000FF" stroke="#000" stroke-width="1"/>
<rect x="551.5" y="405.5" width="9" height="42.0" fill="#0000FF" stroke="#000" stroke-width="1"/>
<rect x="565.5" y="424.5" width="9" height="23.0" fill="#0000FF" stroke="#000" stroke-width="1"/>
<rect x="578.5" y="428.5" width="9" height="19.0" fill="#0000FF" stroke="#000" stroke-width="1"/>
<rect x="592.5" y="438.5" width="9" height="9.0" fill="#0000FF" stroke="#000" stroke-width="1"/>
<rect x="606.5" y="442.5" width="9" height="5.0" fill="#0000FF" stroke="#000" stroke-width="1"/>
<rect x="619.5" y="444.5" width="9" height="3.0" fill="#0000FF" stroke="#000" stroke-width="1"/>
<text x="257.6" y="441.4" font-size="10.5" fill="#FF0000" text-anchor="middle">6</text>
<text x="271.1" y="439.4" font-size="10.5" fill="#FF0000" text-anchor="middle">10</text>
<text x="284.7" y="433.3" font-size="10.5" fill="#FF0000" text-anchor="middle">22</text>
<text x="298.3" y="426.1" font-size="10.5" fill="#FF0000" text-anchor="middle">36</text>
<text x="311.9" y="413.9" font-size="10.5" fill="#FF0000" text-anchor="middle">60</text>
<text x="325.5" y="403.7" font-size="10.5" fill="#FF0000" text-anchor="middle">80</text>
<text x="339.1" y="398.6" font-size="10.5" fill="#FF0000" text-anchor="middle">90</text>
<text x="352.7" y="378.7" font-size="10.5" fill="#FF0000" text-anchor="middle">129</text>
<text x="366.3" y="355.2" font-size="10.5" fill="#FF0000" text-anchor="middle">175</text>
<text x="379.9" y="345.6" font-size="10.5" fill="#FF0000" text-anchor="middle">194</text>
<text x="393.4" y="332.8" font-size="10.5" fill="#FF0000" text-anchor="middle">219</text>
<text x="407.0" y="312.9" font-size="10.5" fill="#FF0000" text-anchor="middle">258</text>
<text x="420.6" y="319.6" font-size="10.5" fill="#FF0000" text-anchor="middle">245</text>
<text x="434.2" y="296.1" font-size="10.5" fill="#FF0000" text-anchor="middle">291</text>
<text x="447.8" y="298.1" font-size="10.5" fill="#FF0000" text-anchor="middle">287</text>
<text x="461.4" y="293.0" font-size="10.5" fill="#FF0000" text-anchor="middle">297</text>
<text x="475.0" y="315.5" font-size="10.5" fill="#FF0000" text-anchor="middle">253</text>
<text x="488.6" y="321.1" font-size="10.5" fill="#FF0000" text-anchor="middle">242</text>
<text x="502.2" y="338.4" font-size="10.5" fill="#FF0000" text-anchor="middle">208</text>
<text x="515.8" y="368.0" font-size="10.5" fill="#FF0000" text-anchor="middle">150</text>
<text x="529.3" y="373.6" font-size="10.5" fill="#FF0000" text-anchor="middle">139</text>
<text x="542.9" y="396.6" font-size="10.5" fill="#FF0000" text-anchor="middle">94</text>
<text x="556.5" y="402.7" font-size="10.5" fill="#FF0000" text-anchor="middle">82</text>
<text x="570.1" y="421.0" font-size="10.5" fill="#FF0000" text-anchor="middle">46</text>
<text x="583.7" y="425.6" font-size="10.5" fill="#FF0000" text-anchor="middle">37</text>
<text x="597.3" y="435.3" font-size="10.5" fill="#FF0000" text-anchor="middle">18</text>
<text x="610.9" y="439.4" font-size="10.5" fill="#FF0000" text-anchor="middle">10</text>
<text x="624.5" y="441.4" font-size="10.5" fill="#FF0000" text-anchor="middle">6</text>
</svg>
<div style="left:647px;top:82px;width:149px;height:390px;background:#FFE4CA;border:1px solid;border-color:#fff #000 #000 #fff;box-shadow:inset -1px -1px 0 #808080;"></div>
<div style="left:697px;top:35px;width:48px;height:23px;background:#FFE4CA;border:1px solid;border-color:#fff #000 transparent #fff;border-bottom:none;border-radius:2px 2px 0 0;box-shadow:inset -1px 0 0 #808080;text-align:center;font-size:12px;line-height:20px;padding-right:3px;">振幅</div>
<div style="left:746px;top:35px;width:50px;height:23px;background:#FFE4CA;border:1px solid;border-color:#fff #000 transparent #fff;border-bottom:none;border-radius:2px 2px 0 0;box-shadow:inset -1px 0 0 #808080;text-align:center;font-size:12px;line-height:20px;padding-right:3px;">其它</div>
<div style="left:647px;top:34px;width:49px;height:24px;background:#FFE4CA;border:1px solid;border-color:#fff #000 transparent #fff;border-bottom:none;border-radius:2px 2px 0 0;box-shadow:inset -1px 0 0 #808080;text-align:center;font-size:12px;line-height:21px;font-weight:bold;font-family:'Liberation Serif',serif;font-size:13px;letter-spacing:0.3px;padding-right:3px;">1 D</div>
<div style="left:711px;top:59px;width:85px;height:23px;background:#FFE4CA;border:1px solid;border-color:#fff #000 transparent #fff;border-bottom:none;border-radius:2px 2px 0 0;box-shadow:inset -1px 0 0 #808080;text-align:center;font-size:12px;line-height:22px;padding-right:3px;">数位和差</div>
<div style="left:647px;top:57px;width:64px;height:25px;background:#FFE4CA;border:1px solid;border-color:#fff #000 transparent #fff;border-bottom:none;border-radius:2px 2px 0 0;box-shadow:inset -1px 0 0 #808080;text-align:center;font-size:12px;line-height:21px;padding-right:3px;">常规</div>
<div style="left:648px;top:82px;width:61px;height:2px;background:#FFE4CA;"></div>
<div style="left:659px;top:94px;width:129px;height:369px;border:1px solid #fff;"></div>
<div style="left:658px;top:93px;width:129px;height:369px;border:1px solid #A0A08C;"></div>
<div style="left:669px;top:104px;width:12px;height:12px;border-radius:50%;background:#fff;border:1px solid;border-color:#85836F #F4F1E6 #F4F1E6 #85836F;box-shadow:inset 1px 1px 0 #5E5C50;"></div>
<div class="rl" style="left:687px;top:103px;">百位</div>
<div style="left:669px;top:124px;width:12px;height:12px;border-radius:50%;background:#fff;border:1px solid;border-color:#85836F #F4F1E6 #F4F1E6 #85836F;box-shadow:inset 1px 1px 0 #5E5C50;"></div>
<div class="rl" style="left:687px;top:123px;">十位</div>
<div style="left:669px;top:144px;width:12px;height:12px;border-radius:50%;background:#fff;border:1px solid;border-color:#85836F #F4F1E6 #F4F1E6 #85836F;box-shadow:inset 1px 1px 0 #5E5C50;"></div>
<div class="rl" style="left:687px;top:143px;">个位</div>
<div style="left:669px;top:164px;width:12px;height:12px;border-radius:50%;background:#fff;border:1px solid;border-color:#85836F #F4F1E6 #F4F1E6 #85836F;box-shadow:inset 1px 1px 0 #5E5C50;"></div>
<div style="left:673px;top:168px;width:4px;height:4px;background:#000;border-radius:50%;"></div>
<div class="rl" style="left:688px;top:163px;font-weight:bold;font-family:'Noto Sans CJK SC',sans-serif;letter-spacing:0.5px;">和值</div>
<div style="left:669px;top:184px;width:12px;height:12px;border-radius:50%;background:#fff;border:1px solid;border-color:#85836F #F4F1E6 #F4F1E6 #85836F;box-shadow:inset 1px 1px 0 #5E5C50;"></div>
<div class="rl" style="left:687px;top:183px;">合值</div>
<div style="left:669px;top:204px;width:12px;height:12px;border-radius:50%;background:#fff;border:1px solid;border-color:#85836F #F4F1E6 #F4F1E6 #85836F;box-shadow:inset 1px 1px 0 #5E5C50;"></div>
<div class="rl" style="left:687px;top:203px;">跨度</div>
<div style="left:669px;top:224px;width:12px;height:12px;border-radius:50%;background:#fff;border:1px solid;border-color:#85836F #F4F1E6 #F4F1E6 #85836F;box-shadow:inset 1px 1px 0 #5E5C50;"></div>
<div class="rl" style="left:687px;top:223px;">对子码和值</div>
<div style="left:669px;top:244px;width:12px;height:12px;border-radius:50%;background:#fff;border:1px solid;border-color:#85836F #F4F1E6 #F4F1E6 #85836F;box-shadow:inset 1px 1px 0 #5E5C50;"></div>
<div class="rl" style="left:687px;top:243px;">对子码跨度</div>
<div style="left:669px;top:264px;width:12px;height:12px;border-radius:50%;background:#fff;border:1px solid;border-color:#85836F #F4F1E6 #F4F1E6 #85836F;box-shadow:inset 1px 1px 0 #5E5C50;"></div>
<div class="rl" style="left:687px;top:263px;">综合数字</div>
</div>
</body></html>
